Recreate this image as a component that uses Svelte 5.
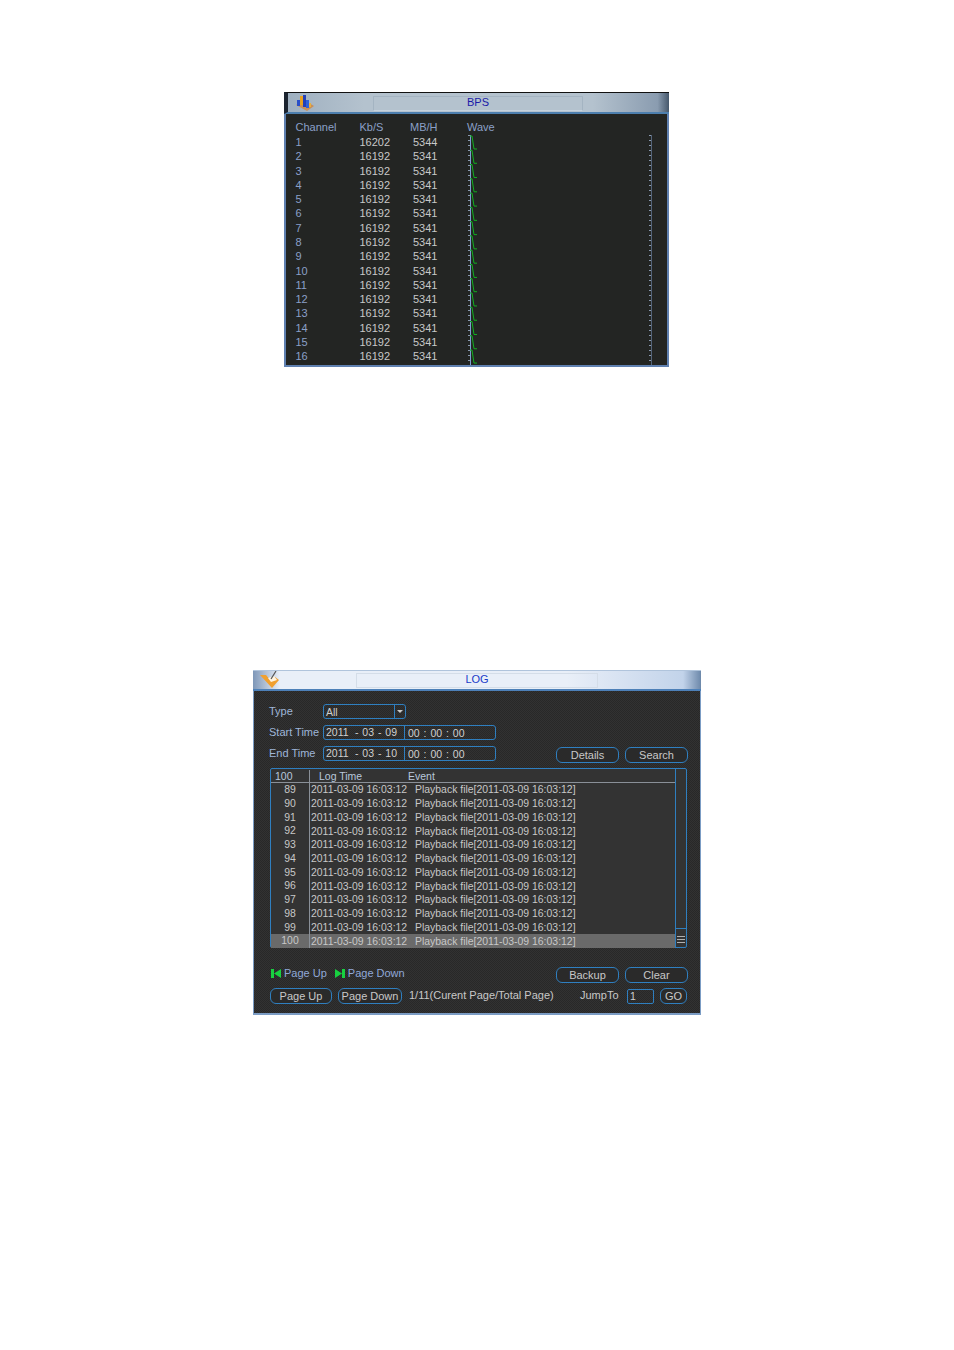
<script>
  const bpsRows = Array.from({ length: 16 }, (_, i) => ({
    channel: i + 1,
    kbs: i === 0 ? 16202 : 16192,
    mbh: i === 0 ? 5344 : 5341
  }));

  const rowPitch = 14.27;
  const waveHeight = 230;
  const wavePath = bpsRows
    .map((_, i) => {
      const y = i * rowPitch + 1;
      return `M3 ${y}H5L7 ${y + 13}H10`;
    })
    .join('');
  const ticks = Array.from({ length: 46 }, (_, i) => i * 5 + 0.5);

  const logRows = Array.from({ length: 12 }, (_, i) => ({
    id: 89 + i,
    time: '2011-03-09 16:03:12',
    event: 'Playback file[2011-03-09 16:03:12]'
  }));
</script>

<div class="page">
  <section class="window bps">
    <header class="titlebar bps-bar">
      <svg class="icon" width="18" height="16" viewBox="0 0 18 16">
        <path d="M0 10L8 5l10 6-7 5z" fill="#c98f58" />
        <rect x="1" y="5" width="3" height="6" fill="#2a50c8" />
        <rect x="4" y="1" width="3" height="9" fill="#e8a020" />
        <rect x="7" y="0" width="3" height="12" fill="#2440b8" />
        <rect x="10" y="5" width="3" height="8" fill="#3060d8" />
        <rect x="13" y="8" width="2" height="4" fill="#e8b040" />
      </svg>
      <div class="title-panel bps-panel">BPS</div>
    </header>
    <div class="bps-body">
      <span class="head">Channel</span>
      <span class="head">Kb/S</span>
      <span class="head">MB/H</span>
      <span class="head">Wave</span>
      <svg class="wave" width="185" height={waveHeight} viewBox="0 0 185 {waveHeight}">
        <path d="M3.5 0V230" stroke="#7f9fd0" fill="none" />
        <path d="M184.500 0V230" stroke="#55657a" fill="none" />
        {#each ticks as t}
          <path d="M1 {t}H3" stroke="#8a9ab0" />
          <path d="M182 {t}H184" stroke="#8a9ab0" />
        {/each}
        <path d={wavePath} stroke="#10b020" fill="none" />
      </svg>
      {#each bpsRows as row}
        <span class="channel">{row.channel}</span>
        <span class="value">{row.kbs}</span>
        <span class="value mbh">{row.mbh}</span>
      {/each}
    </div>
  </section>

  <section class="window log">
    <header class="titlebar log-bar">
      <svg class="icon" width="22" height="18" viewBox="0 0 22 18">
        <path d="M1 4l6 0 5 6 4-4 4 3-7 8z" fill="#f0a030" />
        <path d="M9 7l6-2 3 4-6 2z" fill="#fff4e0" />
        <path d="M12 8L17 0" stroke="#555" stroke-width="1.2" />
      </svg>
      <div class="title-panel log-panel">LOG</div>
    </header>
    <div class="log-body">
      <div class="filters">
        <div class="fields">
          <label class="field">
            <span>Type</span>
            <span class="select"><span>All</span><i class="arrow"></i></span>
          </label>
          <div class="field">
            <span>Start Time</span>
            <span class="input-date">
              <span class="date"><span>2011</span><span>- 03 - 09</span></span>
              <span class="time">00 : 00 : 00</span>
            </span>
          </div>
          <div class="field">
            <span>End Time</span>
            <span class="input-date">
              <span class="date"><span>2011</span><span>- 03 - 10</span></span>
              <span class="time">00 : 00 : 00</span>
            </span>
          </div>
        </div>
        <div class="actions raised">
          <button type="button">Details</button>
          <button type="button">Search</button>
        </div>
      </div>

      <div class="table">
        <div class="table-main">
          <div class="log-head">
            <span class="col-id">100</span>
            <span class="col-time">Log Time</span>
            <span>Event</span>
          </div>
          {#each logRows as row}
            <div class="log-row" class:selected={row.id === 100}>
              <span class="col-num">{row.id}</span>
              <span class="col-stamp">{row.time}</span>
              <span class="col-event">{row.event}</span>
            </div>
          {/each}
        </div>
        <div class="scrollbar"><div class="thumb"></div></div>
      </div>

      <div class="footer">
        <div class="footer-row first">
          <div class="hints">
            <svg width="10" height="9" viewBox="0 0 10 9"><path d="M0 0h3v9H0zM10 0v9L3 4.500z" fill="#18d040" /></svg>
            <span>Page Up</span>
            <svg class="second" width="10" height="9" viewBox="0 0 10 9"><path d="M0 0v9l7-4.500zM7 0h3v9H7z" fill="#18d040" /></svg>
            <span>Page Down</span>
          </div>
          <div class="actions">
            <button type="button">Backup</button>
            <button type="button">Clear</button>
          </div>
        </div>
        <div class="footer-row">
          <button type="button" class="pager">Page Up</button>
          <button type="button" class="pager">Page Down</button>
          <span class="page-info">1/11(Curent Page/Total Page)</span>
          <span class="jump">JumpTo</span>
          <span class="jump-input">1</span>
          <button type="button" class="go">GO</button>
        </div>
      </div>
    </div>
  </section>
</div>

<style>
  :global(body) {
    background: #fff;
    font-family: "Liberation Sans", Arial, sans-serif;
  }

  .page {
    display: flex;
    flex-direction: column;
    align-items: center;
    padding-top: 92px;
    gap: 303px;
    font-size: 11px;
  }

  .window {
    box-sizing: border-box;
    display: flex;
    flex-direction: column;
  }

  .bps {
    width: 385px;
    height: 275px;
    margin-right: 2px;
  }

  .log {
    width: 448px;
    height: 345px;
  }

  .titlebar {
    position: relative;
    flex: none;
    display: flex;
    justify-content: center;
    box-sizing: border-box;
    font-size: 11px;
  }

  .icon {
    position: absolute;
    left: 8px;
    top: 2px;
  }

  .bps-bar {
    height: 22px;
    border-top: 1px solid #111;
    border-left: 4px solid #1c2430;
    border-bottom: 2px solid #4d7fae;
    background: linear-gradient(90deg, #9fb0c0 0, #b4c2ce 20%, #b4c2ce 80%, #8a9cb0 97%, #46586c 100%);
  }

  .bps-panel {
    width: 210px;
    margin-top: 3px;
    height: 15px;
    line-height: 11px;
    border: 1px solid #a4b4c2;
    border-bottom-color: #c6d2dc;
    color: #1a1aa8;
  }

  .log-bar {
    height: 21px;
    border-top: 1px solid #b0c4dc;
    border-bottom: 2px solid #4d80b8;
    background: linear-gradient(90deg, #7e97b8 0, #e9eff8 6%, #e9eff8 70%, #c2d3ea 96%, #6c88aa 100%);
  }

  .log-bar .icon {
    left: 6px;
    top: 0;
  }

  .log-panel {
    width: 242px;
    margin-top: 2px;
    height: 15px;
    line-height: 11px;
    border: 1px solid #d4dde8;
    color: #1a3cc8;
  }

  .title-panel {
    box-sizing: border-box;
    text-align: center;
  }

  .bps-body {
    flex: 1;
    display: grid;
    grid-template-columns: 64px 50.500px 57px 1fr;
    grid-template-rows: 16px;
    grid-auto-rows: 14.27px;
    align-items: center;
    padding: 5px 0 0 10px;
    background: #232523;
    border: 2px solid #5f80b0;
    border-top: none;
    overflow: hidden;
  }

  .head {
    color: #8ba0c8;
  }

  .channel {
    color: #8ba0c8;
  }

  .value {
    color: #c8c8c8;
  }

  .mbh {
    padding-left: 3px;
  }

  .wave {
    grid-column: 4;
    grid-row: 2 / span 16;
    align-self: start;
  }

  .log-body {
    flex: 1;
    display: flex;
    flex-direction: column;
    padding: 13px 12px 0 16px;
    border: 1px solid #7b9cc4;
    border-top: none;
    border-bottom-width: 2px;
    background-color: #2c2c2c;
    background-image: repeating-conic-gradient(#282828 0 25%, #323232 0 50%);
    background-size: 2px 2px;
    color: #c8c8c8;
  }

  .filters {
    display: flex;
    justify-content: space-between;
    align-items: flex-end;
  }

  .fields {
    display: flex;
    flex-direction: column;
    gap: 6px;
    margin-left: -1px;
  }

  .field {
    display: flex;
    align-items: center;
    height: 15px;
    color: #9fb6d8;
  }

  .field > span:first-child {
    width: 54px;
    margin-bottom: 2px;
  }

  .select,
  .input-date,
  .jump-input {
    box-sizing: border-box;
    display: flex;
    align-items: center;
    height: 15px;
    border: 1px solid #2f7fc0;
    border-radius: 3px;
    color: #d0d0d0;
    font-size: 10.5px;
  }

  .select {
    width: 83px;
    padding-left: 2px;
    justify-content: space-between;
  }

  .arrow {
    display: flex;
    align-items: center;
    justify-content: center;
    width: 10px;
    height: 13px;
    border-left: 1px solid #2f7fc0;
  }

  .arrow::after {
    content: "";
    border: 3px solid transparent;
    border-top-color: #c8c8c8;
    border-bottom: none;
  }

  .input-date {
    width: 173px;
  }

  .date {
    box-sizing: border-box;
    display: flex;
    justify-content: space-between;
    width: 81px;
    height: 13px;
    line-height: 13px;
    padding: 0 7px 0 2px;
    border-right: 1px solid #2f7fc0;
    white-space: pre;
    word-spacing: 1px;
  }

  .time {
    padding-left: 3px;
    word-spacing: 1px;
  }

  .actions {
    display: flex;
    gap: 6px;
  }

  .raised {
    margin-bottom: -2px;
  }

  button {
    box-sizing: border-box;
    width: 63px;
    height: 16px;
    padding: 0 0 1px;
    border: 1px solid #2f7fc0;
    border-radius: 6px;
    background: #2a2a2a;
    color: #c8c8c8;
    font: 11px "Liberation Sans", Arial, sans-serif;
  }

  .table {
    display: flex;
    height: 180px;
    box-sizing: border-box;
    margin: 7px 1px 0 0;
    border: 1px solid #2f7fc0;
    border-radius: 2px;
    background: #333;
  }

  .table-main {
    flex: 1;
    min-width: 0;
  }

  .scrollbar {
    display: flex;
    flex-direction: column;
    justify-content: flex-end;
    width: 10px;
    border-left: 1px solid #2f7fc0;
  }

  .thumb {
    height: 18px;
    border-top: 1px solid #2f7fc0;
    background: repeating-linear-gradient(#333 0 2px, #b0b0b0 2px 3px) center / 8px 9px no-repeat;
  }

  .log-head {
    display: flex;
    align-items: center;
    height: 13px;
    border-bottom: 1px solid #8a9098;
    color: #b8c8dc;
    font-size: 10.5px;
  }

  .col-id {
    box-sizing: border-box;
    width: 39px;
    padding-left: 4px;
    border-right: 1px solid #8a9098;
  }

  .col-time {
    width: 98px;
    padding-left: 9px;
    box-sizing: border-box;
  }

  .log-row {
    display: flex;
    align-items: center;
    height: 13.75px;
    font-size: 10.45px;
    white-space: nowrap;
  }

  .selected {
    background: #6a6a6a;
  }

  .col-num {
    box-sizing: border-box;
    width: 39px;
    height: 100%;
    line-height: 13.75px;
    text-align: center;
    border-right: 1px solid #8a9098;
  }

  .col-stamp {
    box-sizing: border-box;
    width: 105px;
    padding-left: 1px;
  }

  .footer {
    display: flex;
    flex-direction: column;
    gap: 5px;
    margin-top: 19px;
  }

  .footer-row {
    display: flex;
    align-items: center;
    height: 16px;
  }

  .first {
    justify-content: space-between;
  }

  .hints {
    display: flex;
    align-items: center;
    gap: 3px;
    padding-left: 1px;
    margin-bottom: 4px;
    color: #90a8d8;
  }

  .hints .second {
    margin-left: 5px;
  }

  .pager {
    width: 62px;
    margin-right: 6px;
  }

  .pager + .pager {
    width: 64px;
    margin-right: 7px;
  }

  .page-info {
    width: 171px;
    margin-bottom: 3px;
  }

  .jump {
    width: 47px;
    margin-bottom: 2px;
  }

  .jump-input {
    width: 27px;
    padding-left: 2px;
    margin-right: 6px;
    border-radius: 2px;
  }

  .go {
    width: 27px;
  }
</style>
